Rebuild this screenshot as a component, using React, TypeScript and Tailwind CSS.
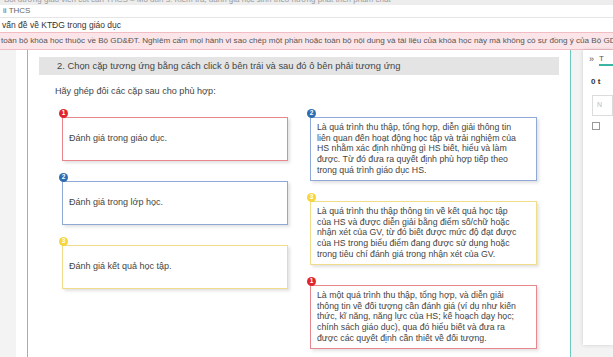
import React from 'react';

type Tone = 'red' | 'blue' | 'yellow';

const tones: Record<Tone, { border: string; badge: string }> = {
  red: { border: 'border-[#e9878e]', badge: 'bg-[#e0262c]' },
  blue: { border: 'border-[#8ea9d6]', badge: 'bg-[#2f6db3]' },
  yellow: { border: 'border-[#f0dd8c]', badge: 'bg-[#f7d53c]' },
};

const leftItems: { n: number; tone: Tone; text: string }[] = [
  { n: 1, tone: 'red', text: 'Đánh giá trong giáo dục.' },
  { n: 2, tone: 'blue', text: 'Đánh giá trong lớp học.' },
  { n: 3, tone: 'yellow', text: 'Đánh giá kết quả học tập.' },
];

const rightItems: { n: number; tone: Tone; lines: string[] }[] = [
  {
    n: 2,
    tone: 'blue',
    lines: [
      'Là quá trình thu thập, tổng hợp, diễn giải thông tin',
      'liên quan đến hoạt động học tập và trải nghiệm của',
      'HS nhằm xác định những gì HS biết, hiểu và làm',
      'được. Từ đó đưa ra quyết định phù hợp tiếp theo',
      'trong quá trình giáo dục HS.',
    ],
  },
  {
    n: 3,
    tone: 'yellow',
    lines: [
      'Là quá trình thu thập thông tin về kết quả học tập',
      'của HS và được diễn giải bằng điểm số/chữ hoặc',
      'nhận xét của GV, từ đó biết được mức độ đạt được',
      'của HS trong biểu điểm đang được sử dụng hoặc',
      'trong tiêu chí đánh giá trong nhận xét của GV.',
    ],
  },
  {
    n: 1,
    tone: 'red',
    lines: [
      'Là một quá trình thu thập, tổng hợp, và diễn giải',
      'thông tin về đối tượng cần đánh giá (ví dụ như kiến',
      'thức, kĩ năng, năng lực của HS; kế hoạch dạy học;',
      'chính sách giáo dục), qua đó hiểu biết và đưa ra',
      'được các quyết định cần thiết về đối tượng.',
    ],
  },
];

const Badge = ({ n, tone }: { n: number; tone: Tone }) => (
  <span
    className={`absolute -left-[4px] -top-[9px] w-[9px] h-[9px] rounded-full flex items-center justify-center text-[6.5px] font-bold leading-none text-white ${tones[tone].badge}`}
  >
    {n}
  </span>
);

export default function App() {
  return (
    <div className="w-[613px] h-[357px] overflow-hidden bg-white text-[#333] font-['Liberation_Sans',Arial,sans-serif] flex flex-col">
      {/* breadcrumb rows */}
      <div className="shrink-0 h-[5px] bg-[#ededed] overflow-hidden">
        <div className="-mt-[5px] text-[8px] leading-[9px] text-[#9a9a9a] whitespace-nowrap pl-[4px]">
          Bồi dưỡng giáo viên cốt cán THCS – Mô đun 3: Kiểm tra, đánh giá học sinh theo hướng phát triển phẩm chất
        </div>
      </div>
      <div className="shrink-0 h-[13px] border-b border-[#e6e6e6] flex items-center pl-[3px] text-[8px] text-[#666] whitespace-nowrap">
        ii THCS
      </div>
      <div className="shrink-0 h-[14px] flex items-center pl-[2px] text-[8.5px] text-[#333] whitespace-nowrap">
        vấn đề về KTĐG trong giáo dục
      </div>
      <div className="shrink-0 h-[18px] bg-[#fce5e8] border-y border-[#f2bcc3] flex items-center pl-[1px] text-[8.1px] text-[#555] whitespace-nowrap overflow-hidden">
        toàn bộ khóa học thuộc về Bộ GD&amp;ĐT. Nghiêm cấm mọi hành vi sao chép một phần hoặc toàn bộ nội dung và tài liệu của khóa học này mà không có sự đồng ý của Bộ GD&amp;ĐT.
      </div>

      <div className="flex flex-1 min-h-0">
        <div className="w-[16px] bg-[#f3f3f3]" />
        <div className="w-[11px]" />
        <main className="w-[544px] border-x border-[#6cc9be] flex flex-col">
          <div className="mx-[11px] mt-[7px] h-[18px] bg-[#e4e4e4] flex items-center pl-[18px] text-[9.4px] text-[#444] whitespace-nowrap">
            2. Chọn cặp tương ứng bằng cách click ô bên trái và sau đó ô bên phải tương ứng
          </div>
          <p className="mt-[10px] pl-[27px] text-[9.1px] text-[#444] leading-[12px]">
            Hãy ghép đôi các cặp sau cho phù hợp:
          </p>
          <div className="mt-[20px] flex gap-[22px] pl-[34px]">
            <div className="w-[226px] flex flex-col gap-[20px]">
              {leftItems.map((it) => (
                <div
                  key={it.n}
                  className={`relative h-[44px] border ${tones[it.tone].border} bg-white shadow-[2px_2px_3px_rgba(0,0,0,0.12)] flex items-center pl-[6px] text-[9px] text-[#444]`}
                >
                  <Badge n={it.n} tone={it.tone} />
                  {it.text}
                </div>
              ))}
            </div>
            <div className="w-[227px] flex flex-col gap-[20px]">
              {rightItems.map((it) => (
                <div
                  key={it.n}
                  className={`relative h-[64px] border ${tones[it.tone].border} bg-white shadow-[2px_2px_3px_rgba(0,0,0,0.12)] pl-[6px] pt-[4px] text-[8.75px] leading-[10.7px] text-[#444] whitespace-nowrap`}
                >
                  <Badge n={it.n} tone={it.tone} />
                  {it.lines.map((l, i) => (
                    <div key={i}>{l}</div>
                  ))}
                </div>
              ))}
            </div>
          </div>
        </main>
        <div className="flex-1 bg-[#f3f3f3] pl-[12px] pb-[12px]">
          <div className="h-full bg-white shadow-[0_0_4px_rgba(0,0,0,0.15)] pl-[4px] pt-[5px] overflow-hidden">
            <div className="flex items-center gap-[5px] text-[8px] text-[#555] h-[12px] pl-[2px] border-b-2 border-transparent">
              <span className="text-[9px]">»</span>
              <span className="flex-1 border-b-2 border-[#3bb3a5] leading-[10px]">T</span>
            </div>
            <div className="mt-[9px] pl-[4px] text-[8px] font-bold text-[#333]">0 t</div>
            <div className="mt-[7px] ml-[5px] h-[21px] border border-[#dcdcdc] text-[7px] text-[#bbb] pl-[4px] pt-[4px]">N</div>
            <div className="mt-[6px] ml-[5px] w-[8px] h-[8px] border border-[#999]" />
          </div>
        </div>
      </div>
    </div>
  );
}
